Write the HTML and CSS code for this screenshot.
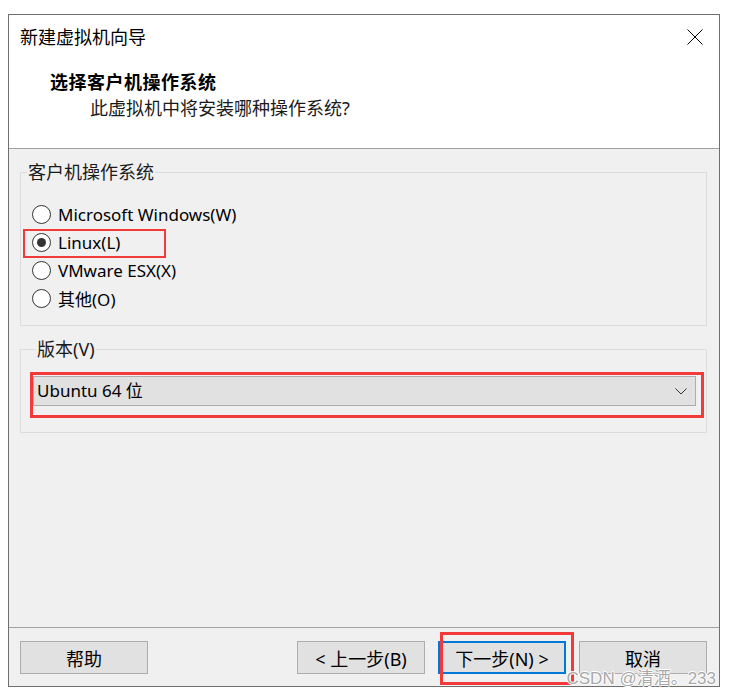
FILE: index.html
```html
<!DOCTYPE html>
<html lang="zh-CN">
<head>
<meta charset="utf-8">
<title>新建虚拟机向导</title>
<link rel="stylesheet" href="styles.css">
</head>
<body>
<div class="window">
  <div class="header">
    <div class="titlebar">
      <span class="title">新建虚拟机向导</span>
      <svg class="close" width="16" height="16" viewBox="0 0 16 16"><path d="M0.5 0.5 L15.5 15.5 M15.5 0.5 L0.5 15.5" stroke="#000" stroke-width="1" fill="none"/></svg>
    </div>
    <div class="heading">选择客户机操作系统</div>
    <div class="subheading">此虚拟机中将安装哪种操作系统?</div>
  </div>
  <div class="content">
    <fieldset class="group os">
      <legend>客户机操作系统</legend>
      <div class="radios">
        <div class="radio"><span class="circle"></span><span>Microsoft Windows(W)</span></div>
        <div class="radio marked"><span class="circle checked"></span><span>Linux(L)</span></div>
        <div class="radio"><span class="circle"></span><span>VMware ESX(X)</span></div>
        <div class="radio"><span class="circle"></span><span>其他(O)</span></div>
      </div>
    </fieldset>
    <fieldset class="group version">
      <legend>版本(V)</legend>
      <div class="combo-mark">
        <div class="combo">
          <span class="combo-text">Ubuntu 64 位</span>
          <svg class="chevron" width="12" height="7" viewBox="0 0 12 7"><path d="M0.5 0.5 L6 6 L11.5 0.5" stroke="#333" stroke-width="1" fill="none"/></svg>
        </div>
      </div>
    </fieldset>
  </div>
  <div class="footer">
    <button class="btn">帮助</button>
    <div class="spacer"></div>
    <button class="btn">&lt; 上一步(B)</button>
    <span class="btn-mark"><button class="btn primary">下一步(N) &gt;</button></span>
    <button class="btn">取消</button>
  </div>
</div>
<div class="watermark">CSDN @清酒。233</div>
</body>
</html>
```

FILE: styles.css
```css
* { box-sizing: border-box; }
html, body { margin: 0; padding: 0; background: #fff; }
body {
  font-family: "Noto Sans", "Noto Sans CJK SC", sans-serif;
  font-size: 17px;
  color: #000;
  width: 732px;
  height: 697px;
  position: relative;
  overflow: hidden;
}
.window {
  margin: 14px 0 0 8px;
  width: 712px;
  height: 673px;
  border: 1px solid #6f6f6f;
  display: flex;
  flex-direction: column;
  background: #f0f0f0;
}
.header {
  background: #fff;
  height: 134px;
  border-bottom: 1px solid #a0a0a0;
  flex: none;
}
.titlebar {
  height: 43px;
  display: flex;
  align-items: center;
  justify-content: space-between;
  padding: 0 16px 0 11px;
}
.title { font-size: 18px; line-height: 24px; }
.close { display: block; margin-top: 1px; }
.heading {
  margin-top: 12px;
  padding-left: 41px;
  font-weight: bold;
  font-size: 18px;
  line-height: 24px;
  letter-spacing: 0.5px;
}
.subheading {
  margin-top: 2px;
  padding-left: 81px;
  font-size: 18px;
  line-height: 24px;
  color: #1a1a1a;
}
.content {
  flex: 1;
  padding: 13px 12px 0 11px;
}
.group {
  margin: 0;
  padding: 0;
  border: 1px solid #dcdcdc;
  min-width: 0;
}
.group legend {
  margin-left: 6px;
  padding: 0 1px;
  font-size: 18px;
  line-height: 20px;
  color: #1a1a1a;
}
.radios {
  padding: 18px 0 13px 11px;
}
.radio {
  height: 28px;
  display: flex;
  align-items: center;
  gap: 7px;
  position: relative;
}
.radio.marked::after {
  content: "";
  position: absolute;
  left: -9px;
  top: 1px;
  width: 139px;
  height: 25px;
  border: 2px solid #f33a3a;
}
.circle {
  width: 19px;
  height: 19px;
  border: 1px solid #333;
  border-radius: 50%;
  background: #fff;
  display: flex;
  align-items: center;
  justify-content: center;
  flex: none;
}
.circle.checked::before {
  content: "";
  width: 9px;
  height: 9px;
  border-radius: 50%;
  background: #333;
}
.version {
  margin-top: 13px;
  padding: 13px 2px 14px 9px;
}
.combo-mark {
  border: 3px solid #f33a3a;
  padding: 1px 5px 9px 0;
}
.combo {
  height: 30px;
  background: #e1e1e1;
  border: 1px solid #adadad;
  display: flex;
  align-items: center;
  justify-content: space-between;
  padding: 0 8px 0 3px;
}
.combo-text { font-size: 17px; line-height: 20px; }
.chevron { display: block; }
.footer {
  flex: none;
  height: 59px;
  border-top: 1px solid #a0a0a0;
  display: flex;
  align-items: flex-start;
  gap: 13px;
  padding: 13px 12px 0 11px;
}
.spacer { flex: 1; }
.btn {
  width: 128px;
  height: 33px;
  background: #e1e1e1;
  border: 1px solid #adadad;
  font-family: "Noto Sans", "Noto Sans CJK SC", sans-serif;
  font-size: 18px;
  color: #000;
  padding: 0;
  margin: 0;
  display: block;
}
.btn.primary {
  border: 2px solid #0078d7;
}
.btn-mark {
  position: relative;
  display: block;
}
.btn-mark::after {
  content: "";
  position: absolute;
  left: 2px;
  top: -9px;
  width: 128px;
  height: 47px;
  border: 3px solid #f33a3a;
}
.watermark {
  position: absolute;
  right: 16px;
  top: 668px;
  font-family: "Liberation Sans", "Noto Sans CJK SC", sans-serif;
  font-size: 17px;
  line-height: 22px;
  color: #a8a8a8;
  text-shadow: 1px 0 #fff, -1px 0 #fff, 0 1px #fff, 0 -1px #fff;
}
```
